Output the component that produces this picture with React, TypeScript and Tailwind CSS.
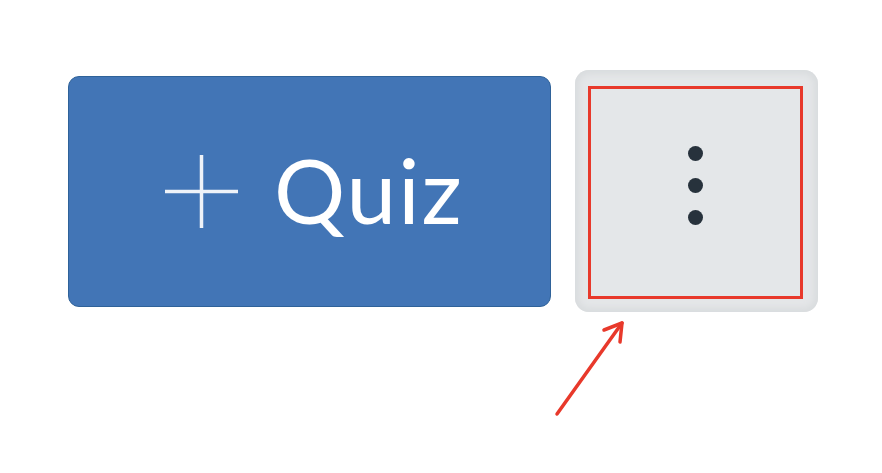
import React from "react";

function KebabDots() {
  return (
    <div className="flex flex-col items-center gap-[17px]">
      <span className="block h-[15px] w-[15px] rounded-full bg-[#27323c]" />
      <span className="block h-[15px] w-[15px] rounded-full bg-[#27323c]" />
      <span className="block h-[15px] w-[15px] rounded-full bg-[#27323c]" />
    </div>
  );
}

export default function App() {
  return (
    <div
      className="relative h-[473px] w-[882px] overflow-hidden bg-white"
      style={{ fontFamily: "Lato, 'Open Sans', sans-serif" }}
    >
      <div className="flex items-center gap-[24px] pl-[68px] pt-[70px]">
        {/* Add quiz button */}
        <button className="flex h-[231px] w-[483px] items-center gap-[36px] rounded-[11px] border border-[#2f6299] bg-[#4275b6] pl-[96px] text-white">
          <svg width="73" height="73" viewBox="0 0 73 73" className="shrink-0">
            <path d="M36.5 0V73M0 36.5H73" stroke="#eef2f8" strokeWidth="3.5" />
          </svg>
          <span className="mb-[4px] text-[89px] leading-none font-normal tracking-[2px]">Quiz</span>
        </button>

        {/* More options button with focus ring and highlight box */}
        <div className="relative flex h-[242px] w-[243px] items-center justify-center rounded-[14px] bg-[#e4e6e8] shadow-[inset_0_0_6px_4px_#d9dcde]">
          <div className="absolute left-[13px] top-[16px] h-[213px] w-[215px] border-[3px] border-[#e8392b] bg-[#e4e7e9]" />
          <div className="relative -ml-[3px] -mt-[11px]">
            <KebabDots />
          </div>
        </div>
      </div>

      {/* Annotation arrow */}
      <svg className="absolute left-0 top-0" width="882" height="473" viewBox="0 0 882 473">
        <path d="M557 414L622 323" stroke="#e8392b" strokeWidth="3.5" strokeLinecap="round" fill="none" />
        <path d="M604 330L622 323L620 342" stroke="#e8392b" strokeWidth="3.5" strokeLinecap="round" strokeLinejoin="round" fill="none" />
      </svg>
    </div>
  );
}
